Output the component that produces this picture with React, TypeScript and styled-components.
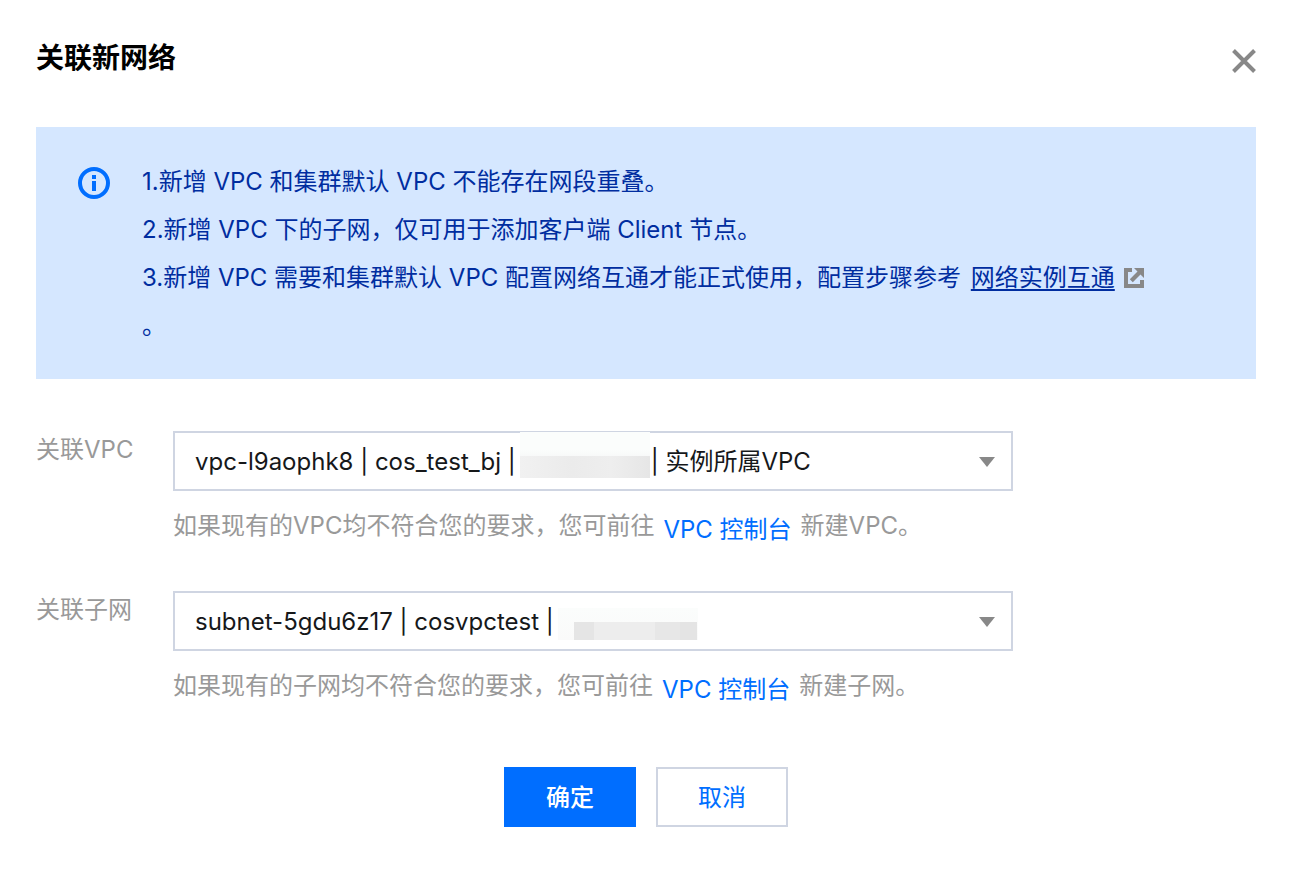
import React from "react";
import styled, { createGlobalStyle } from "styled-components";

const GlobalStyle = createGlobalStyle`
  *, *::before, *::after { box-sizing: border-box; }
  body {
    margin: 0;
    background: #fff;
    color: #16181a;
    font-family: Inter, "Noto Sans CJK SC", sans-serif;
    font-size: 24px;
    line-height: 36px;
  }
`;

const Dialog = styled.section`
  padding: 36px 42px 44px 36px;
`;

const Header = styled.header`
  display: flex;
  justify-content: space-between;
  align-items: center;
  height: 44px;
  margin-bottom: 47px;
`;

const Title = styled.h1`
  margin: 0;
  color: #000;
  font-size: 28px;
  font-weight: 700;
  line-height: 44px;
`;

const CloseButton = styled.button`
  display: flex;
  margin: 0;
  padding: 6px 0 0;
  border: 0;
  background: none;
  cursor: pointer;
`;

const Alert = styled.div`
  display: flex;
  gap: 32px;
  padding: 31px 40px 29px 42px;
  margin-bottom: 52px;
  background: #d5e7ff;
  color: #002da0;
`;

const AlertIcon = styled.svg`
  flex: none;
  width: 32px;
  height: 32px;
  margin-top: 9px;
`;

const AlertBody = styled.div`
  flex: 1;
  line-height: 48px;
`;

const AlertLine = styled.p`
  margin: 0;
`;

const AlertLink = styled.a`
  margin: 0 3px;
  color: inherit;
  text-decoration-thickness: 2px;
  text-underline-offset: 3px;
`;

const ExternalIcon = styled.svg`
  width: 20px;
  height: 20px;
  margin-left: 6px;
  vertical-align: -2px;
`;

const Field = styled.div`
  display: grid;
  grid-template-columns: 137px minmax(0, 840px);
  margin-bottom: 47px;
`;

const Label = styled.label`
  color: #999;
  line-height: 38px;
`;

const SelectBox = styled.div`
  position: relative;
  display: flex;
  align-items: center;
`;

const Select = styled.select`
  width: 100%;
  height: 60px;
  padding: 2px 60px 0 20px;
  border: 2px solid #cfd5e2;
  border-radius: 0;
  appearance: none;
  background: #fff;
  color: inherit;
  font: inherit;
`;

const Arrow = styled.svg`
  position: absolute;
  top: 26px;
  right: 18px;
  width: 16px;
  height: 10px;
  pointer-events: none;
`;

const Mask = styled.span<{ $left: number; $top: number; $width: number; $height: number; $fill: string }>`
  position: absolute;
  left: ${(p) => p.$left}px;
  top: ${(p) => p.$top}px;
  width: ${(p) => p.$width}px;
  height: ${(p) => p.$height}px;
  background: ${(p) => p.$fill};
  pointer-events: none;
`;

const Help = styled.p`
  margin: 17px 0 0;
  color: #999;
`;

const HelpLink = styled.a`
  display: inline-block;
  margin: 0 9px;
  color: #006eff;
  line-height: 24px;
  vertical-align: -4px;
  text-decoration: none;
`;

const Footer = styled.footer`
  display: flex;
  justify-content: center;
  gap: 20px;
  padding-top: 16px;
`;

const Button = styled.button<{ $primary?: boolean }>`
  width: 132px;
  height: 60px;
  padding: 2px 0 0;
  border: 2px solid ${(p) => (p.$primary ? "#006eff" : "#cfd5e2")};
  background: ${(p) => (p.$primary ? "#006eff" : "#fff")};
  color: ${(p) => (p.$primary ? "#fff" : "#006eff")};
  font: inherit;
  font-weight: ${(p) => (p.$primary ? 500 : 400)};
  cursor: pointer;
`;

const SelectArrow = () => (
  <Arrow viewBox="0 0 16 10" aria-hidden="true">
    <path d="M0 0h16L8 10z" fill="#888" />
  </Arrow>
);

const hiddenRange = "\u00a0".repeat(20);

export default function App() {
  return (
    <>
      <GlobalStyle />
      <Dialog role="dialog" aria-labelledby="dialog-title">
        <Header>
          <Title id="dialog-title">关联新网络</Title>
          <CloseButton type="button" aria-label="关闭">
            <svg width="24" height="24" viewBox="0 0 24 24" aria-hidden="true">
              <path d="M1.5 1.5l21 21M22.5 1.5l-21 21" stroke="#888" strokeWidth="4" />
            </svg>
          </CloseButton>
        </Header>

        <Alert role="note">
          <AlertIcon viewBox="0 0 32 32" aria-hidden="true">
            <circle cx="16" cy="16" r="14" fill="none" stroke="#006eff" strokeWidth="4" />
            <path d="M14 8h4v4h-4zM14 14h4v10h-4z" fill="#006eff" />
          </AlertIcon>
          <AlertBody>
            <AlertLine>1.新增 VPC 和集群默认 VPC 不能存在网段重叠。</AlertLine>
            <AlertLine>2.新增 VPC 下的子网，仅可用于添加客户端 Client 节点。</AlertLine>
            <AlertLine>
              3.新增 VPC 需要和集群默认 VPC 配置网络互通才能正式使用，配置步骤参考{" "}
              <AlertLink href="#peering">网络实例互通</AlertLink>
              <ExternalIcon viewBox="0 0 20 20" aria-hidden="true">
                <path d="M0 0h8v4H4v12h12v-4h4v8H0zM10 0h10v10l-3.500-3.500-7.700 7.700-3-3L13.500 3.500z" fill="#888" />
              </ExternalIcon>
            </AlertLine>
            <AlertLine>。</AlertLine>
          </AlertBody>
        </Alert>

        <Field>
          <Label htmlFor="vpc">关联VPC</Label>
          <div>
            <SelectBox>
              <Select id="vpc">
                <option>{`vpc-l9aophk8 | cos_test_bj |${hiddenRange}| 实例所属VPC`}</option>
              </Select>
              <Mask
                $left={347}
                $top={1}
                $width={130}
                $height={46}
                $fill="linear-gradient(#fbfdfc 0 18px, #f8f9f9 24px, transparent 24px), linear-gradient(90deg, #f1f1f1, #ebebeb 40%, #eee 70%, #e6e6e6)"
              />
              <SelectArrow />
            </SelectBox>
            <Help>
              如果现有的VPC均不符合您的要求，您可前往
              <HelpLink href="#vpc-console">VPC 控制台</HelpLink>
              新建VPC。
            </Help>
          </div>
        </Field>

        <Field>
          <Label htmlFor="subnet">关联子网</Label>
          <div>
            <SelectBox>
              <Select id="subnet">
                <option>subnet-5gdu6z17 | cosvpctest |</option>
              </Select>
              <Mask $left={385} $top={17} $width={140} $height={32} $fill="linear-gradient(#fbfdfc, #fafafa)" />
              <Mask
                $left={401}
                $top={31}
                $width={123}
                $height={18}
                $fill="linear-gradient(90deg, #e5e5e5 0 20px, #ededed 20px 81px, #e7e7e7 81px 106px, #e4e4e4 106px)"
              />
              <SelectArrow />
            </SelectBox>
            <Help>
              如果现有的子网均不符合您的要求，您可前往
              <HelpLink href="#subnet-console">VPC 控制台</HelpLink>
              新建子网。
            </Help>
          </div>
        </Field>

        <Footer>
          <Button type="button" $primary>
            确定
          </Button>
          <Button type="button">取消</Button>
        </Footer>
      </Dialog>
    </>
  );
}
